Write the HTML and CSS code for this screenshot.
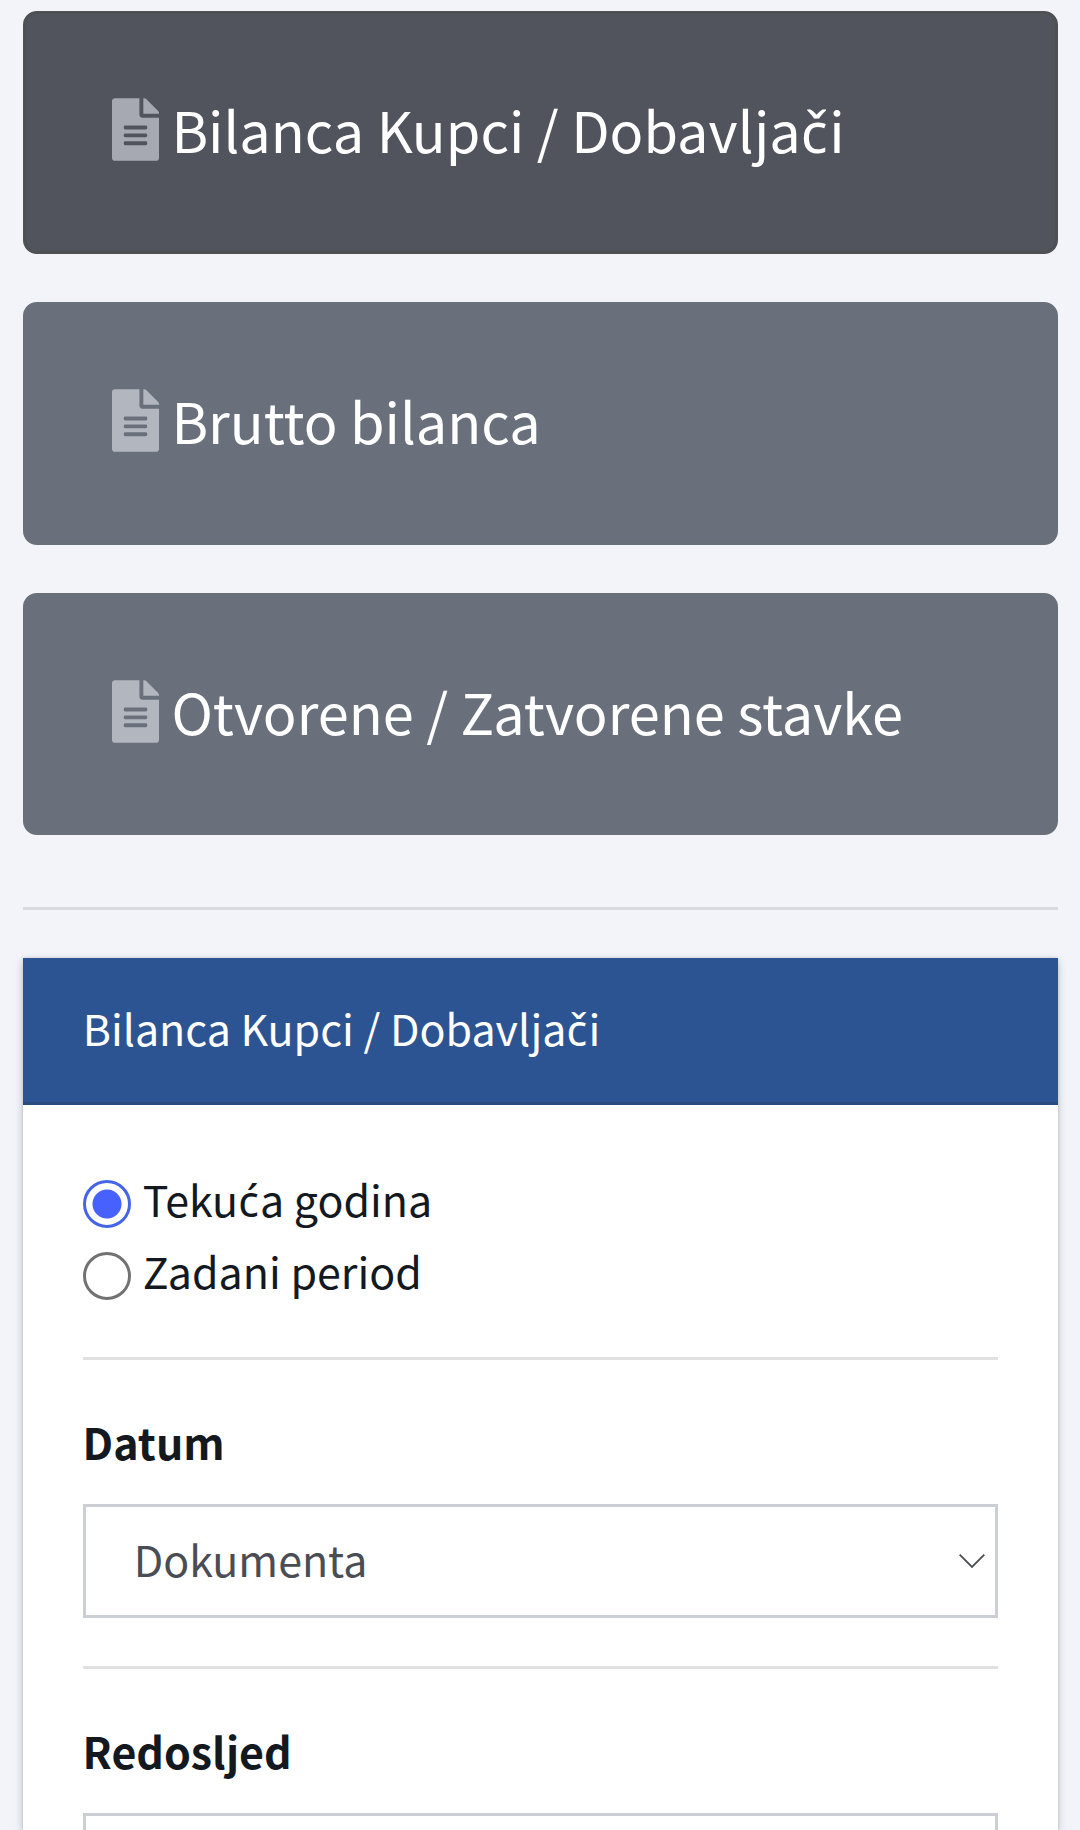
FILE: index.html
```html
<!DOCTYPE html>
<html lang="hr">
<head>
<meta charset="utf-8">
<title>Bilanca Kupci / Dobavljači</title>
<link rel="stylesheet" href="styles.css">
</head>
<body>
<svg class="defs" width="0" height="0" aria-hidden="true">
  <symbol id="file" viewBox="0 0 384 512"><path d="M224 136V0H24C10.700 0 0 10.700 0 24v464c0 13.300 10.700 24 24 24h336c13.300 0 24-10.700 24-24V160H248c-13.200 0-24-10.800-24-24zm64 236c0 6.600-5.400 12-12 12H108c-6.600 0-12-5.400-12-12v-8c0-6.600 5.400-12 12-12h168c6.600 0 12 5.400 12 12v8zm0-64c0 6.600-5.400 12-12 12H108c-6.600 0-12-5.400-12-12v-8c0-6.600 5.400-12 12-12h168c6.600 0 12 5.400 12 12v8zm0-72v8c0 6.600-5.400 12-12 12H108c-6.600 0-12-5.400-12-12v-8c0-6.600 5.400-12 12-12h168c6.600 0 12 5.400 12 12zm96-114.100v6.100H256V0h6.100c6.400 0 12.500 2.500 17 7l97.900 98c4.500 4.500 7 10.600 7 16.900z"/></symbol>
</svg>
<main class="page">
  <nav class="reports">
    <a class="report active"><svg class="icon"><use href="#file"/></svg><span class="name">Bilanca Kupci / Dobavlja<span class="accent">č</span>i</span></a>
    <a class="report"><svg class="icon"><use href="#file"/></svg><span class="name">Brutto bilanca</span></a>
    <a class="report last"><svg class="icon"><use href="#file"/></svg><span class="name">Otvorene / Zatvorene stavke</span></a>
  </nav>
  <hr class="divider">
  <section class="card">
    <header class="card-header">Bilanca Kupci / Dobavlja<span class="accent">č</span>i</header>
    <form class="card-body">
      <label class="option"><input class="radio" type="radio" name="period" checked><span class="option-text">Teku<span class="accent">ć</span>a godina</span></label>
      <label class="option"><input class="radio" type="radio" name="period"><span class="option-text">Zadani period</span></label>
      <hr class="rule">
      <div class="label">Datum</div>
      <div class="select"><span class="value">Dokumenta</span><svg class="chevron" viewBox="0 0 26 14"><path d="M.700.700 13 13 25.300.700"/></svg></div>
      <hr class="rule">
      <div class="label">Redosljed</div>
      <div class="select cut"></div>
    </form>
  </section>
</main>
</body>
</html>
```
FILE: styles.css
```css
* { box-sizing: border-box; }
body {
  margin: 0;
  height: 1830px;
  overflow: hidden;
  background: #f3f4f9;
  color: #14191f;
  font: 42.95px/72px "Noto Sans CJK SC", "Noto Sans", sans-serif;
}
.defs { display: none; }
/* The CJK family has no precomposed Croatian letters */
.accent { font-family: "Noto Sans", sans-serif; letter-spacing: .03em; line-height: 1; }
.page { height: 1830px; padding: 11px 22px 0 23px; overflow: hidden; }
.reports { display: flex; flex-direction: column; gap: 48px; }
.report {
  display: flex;
  align-items: flex-start;
  height: 243px;
  padding: 79px 86px 0;
  border: 3px solid #69707a;
  border-radius: 14px;
  background: #6a707b;
  color: #fff;
  font-size: 55.87px;
  line-height: 72px;
  white-space: nowrap;
}
.report.active { background: #51545c; border-color: #4e5054; }
.report.last { height: 242px; }
.icon { width: 47px; height: 63px; margin: 5px 12.4px 0 0; fill: #b2b6be; }
.active .icon { fill: #a6a9b1; }
.divider { height: 3px; margin: 72px 0 48px; border: 0; background: #d8dade; }
.card {
  height: 872px;
  background: #fff;
  box-shadow: 0 0 3px rgba(0, 0, 0, .125), 0 3px 9px rgba(0, 0, 0, .2);
}
.card-header {
  height: 147px;
  padding: 33px 59.700px 0;
  border-bottom: 3px solid #294b80;
  background: #2d5492;
  color: #fff;
  white-space: nowrap;
}
.card-body { padding: 57px 60px 0; }
.option { display: flex; height: 72px; }
.option + .rule { margin-top: 51px; }
.radio {
  appearance: none;
  width: 48px;
  height: 48px;
  margin: 18px 11.700px 0 0;
  border: 3px solid #727272;
  border-radius: 50%;
}
.radio:checked { border-color: #4465e8; background: radial-gradient(circle, #4661ff 14px, #fff 15px); }
.rule { height: 3px; margin: 48px 0 45px; border: 0; background: #e1e1e1; }
.label { height: 99px; margin-left: -.4px; font-weight: 700; }
.select {
  display: flex;
  justify-content: space-between;
  align-items: center;
  height: 114px;
  padding: 0 10px 0 47.700px;
  border: 3px solid #cbcfd4;
  color: #4a4e54;
}
.value { padding-bottom: 6px; }
.select.cut { height: 17px; border-bottom: 0; }
.chevron { width: 26px; height: 14px; fill: none; stroke: #4d4f52; stroke-width: 1.8; }
```
